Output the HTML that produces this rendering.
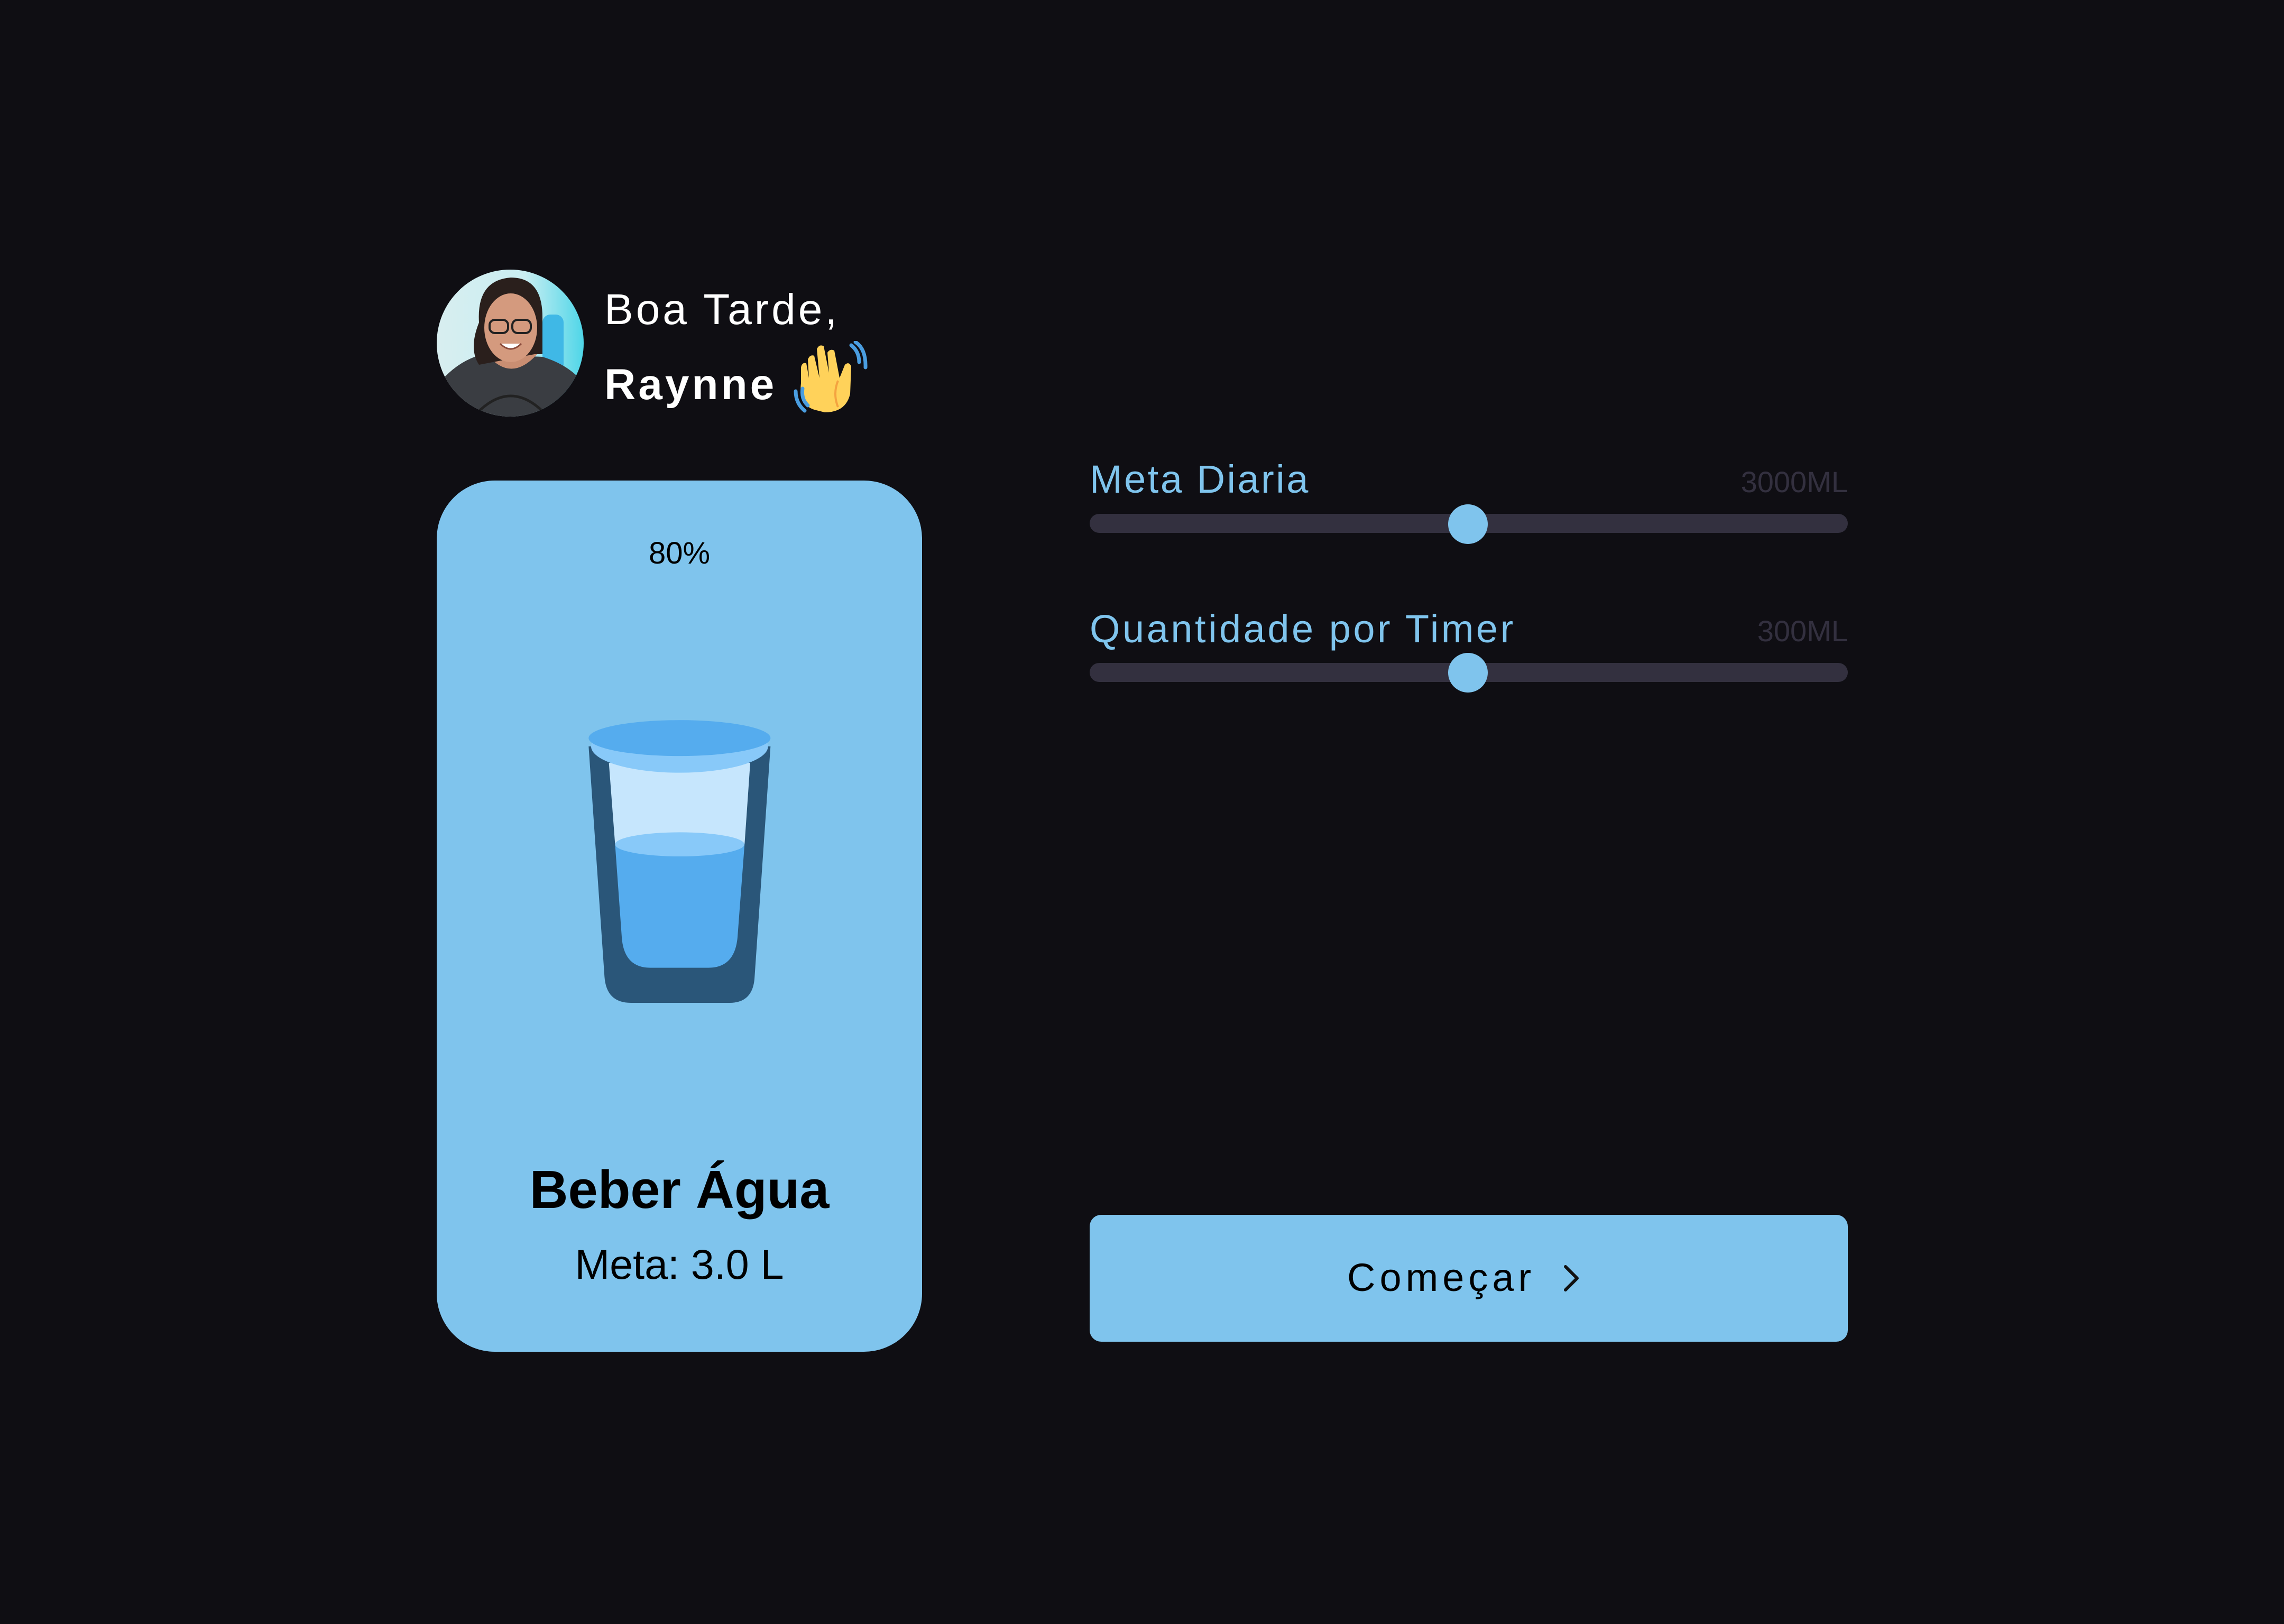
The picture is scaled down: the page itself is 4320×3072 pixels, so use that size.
<!DOCTYPE html>
<html><head><meta charset="utf-8">
<style>
html,body{margin:0;padding:0;background:#0f0e13;}
body{width:4320px;height:3072px;position:relative;overflow:hidden;font-family:"Liberation Sans",sans-serif;}
.abs{position:absolute;white-space:nowrap;}
.card{position:absolute;left:826px;top:909px;width:918px;height:1648px;background:#7fc4ed;border-radius:110px;}
.track{position:absolute;left:2061px;width:1434px;height:36px;background:#33303f;border-radius:18px;}
.thumb{position:absolute;width:75px;height:75px;border-radius:50%;background:#7fc4ed;}
.lbl{color:#7fc4ed;font-size:74px;}
.val{color:#33303f;font-size:56px;}
</style></head><body>

<svg class="abs" style="left:826px;top:510px" width="278" height="278" viewBox="0 0 278 278">
<defs><clipPath id="c"><circle cx="139" cy="139" r="139"/></clipPath>
<linearGradient id="bg" x1="0" x2="1"><stop offset="0" stop-color="#d8eef0"/><stop offset="0.6" stop-color="#c9eef2"/><stop offset="1" stop-color="#4fd6e8"/></linearGradient></defs>
<g clip-path="url(#c)">
<rect width="278" height="278" fill="url(#bg)"/>
<rect x="200" y="85" width="40" height="110" rx="15" fill="#3fb8e6"/>
<path d="M0 220 Q40 170 90 160 L200 165 Q250 180 278 215 L278 278 L0 278Z" fill="#3a3d42"/>
<path d="M95 160 Q140 215 190 160 L185 140 L100 140Z" fill="#c98e72"/>
<path d="M80 100 Q75 20 140 15 Q200 15 200 90 L200 160 L185 160 L80 180 Q60 150 80 100Z" fill="#2a1f1c"/>
<ellipse cx="140" cy="110" rx="50" ry="65" fill="#d49a7e"/>
<rect x="100" y="95" width="35" height="25" rx="10" fill="none" stroke="#222" stroke-width="4"/>
<rect x="143" y="95" width="35" height="25" rx="10" fill="none" stroke="#222" stroke-width="4"/>
<path d="M120 140 Q140 160 160 140" fill="#fff" stroke="#8a4b3b" stroke-width="3"/>
<path d="M70 278 Q140 200 210 278" fill="none" stroke="#222" stroke-width="5"/>
</g></svg>

<div class="abs" style="left:1143px;top:536px;font-size:82px;color:#fff;line-height:100px;letter-spacing:5px;">Boa Tarde,</div>
<div class="abs" style="left:1143px;top:678px;font-size:82px;color:#fff;font-weight:bold;line-height:100px;letter-spacing:5px;">Raynne</div>

<svg class="abs" style="left:1500px;top:645px" width="145" height="140" viewBox="0 0 145 140">
<path d="M40 130 Q10 120 15 80 L15 50 Q17 40 25 42 L30 70 L28 35 Q32 25 40 28 L50 70 L45 15 Q50 5 58 10 L68 60 L65 22 Q70 14 78 18 L88 70 L98 45 Q106 38 110 48 L108 100 Q100 135 60 135Z" fill="#ffd25a"/>
<path d="M85 75 Q75 100 85 125" stroke="#f4a340" stroke-width="4" fill="none"/>
<path d="M110 8 Q125 20 125 40" stroke="#4a9de0" stroke-width="7" fill="none" stroke-linecap="round"/>
<path d="M118 2 Q138 15 137 50" stroke="#4a9de0" stroke-width="7" fill="none" stroke-linecap="round"/>
<path d="M5 95 Q5 118 22 132" stroke="#4a9de0" stroke-width="7" fill="none" stroke-linecap="round"/>
<path d="M18 90 Q15 110 28 122" stroke="#4a9de0" stroke-width="7" fill="none" stroke-linecap="round"/>
</svg>

<div class="card"></div>
<div class="abs" style="left:826px;width:918px;text-align:center;top:1012px;font-size:58px;color:#000;line-height:70px;">80%</div>

<svg class="abs" style="left:1050px;top:1300px" width="500" height="650" viewBox="0 0 1500 1568" preserveAspectRatio="none">
<path d="M190 270 L280 1320 Q290 1440 430 1440 L990 1440 Q1125 1440 1132 1320 L1222 270Z" fill="#2a5679"/>
<path d="M305 345 L340 715 L1075 715 L1107 345Z" fill="#c6e6fd"/>
<path d="M340 715 L378 1140 Q390 1280 540 1280 L870 1280 Q1020 1280 1035 1140 L1075 715Z" fill="#55acee"/>
<ellipse cx="707" cy="717" rx="367" ry="55" fill="#88c9f9"/>
<ellipse cx="706" cy="270" rx="502" ry="120" fill="#88c9f9"/>
<ellipse cx="706" cy="232" rx="516" ry="82" fill="#55acee"/>
</svg>

<div class="abs" style="left:826px;width:918px;text-align:center;top:2186px;font-size:101px;font-weight:bold;color:#000;line-height:130px;">Beber Água</div>
<div class="abs" style="left:826px;width:918px;text-align:center;top:2342px;font-size:79px;color:#000;line-height:100px;">Meta: 3.0 L</div>

<div class="abs lbl" style="left:2061px;top:862px;line-height:90px;letter-spacing:3.5px;">Meta Diaria</div>
<div class="abs val" style="right:825px;top:877px;line-height:70px;">3000ML</div>
<div class="track" style="top:972px"></div>
<div class="thumb" style="left:2739px;top:954px"></div>

<div class="abs lbl" style="left:2061px;top:1145px;line-height:90px;letter-spacing:4.5px;">Quantidade por Timer</div>
<div class="abs val" style="right:825px;top:1159px;line-height:70px;">300ML</div>
<div class="track" style="top:1254px"></div>
<div class="thumb" style="left:2739px;top:1235px"></div>

<div class="abs" style="left:2061px;top:2298px;width:1434px;height:240px;background:#7fc4ed;border-radius:22px;"></div>
<div class="abs" style="left:2548px;top:2372px;font-size:74px;color:#000;line-height:90px;letter-spacing:8px;">Começar</div>
<svg class="abs" style="left:2955px;top:2392px" width="36" height="52" viewBox="0 0 36 52">
<path d="M6 4 L28 26 L6 48" fill="none" stroke="#111" stroke-width="6" stroke-linecap="round" stroke-linejoin="round"/>
</svg>

</body></html>
